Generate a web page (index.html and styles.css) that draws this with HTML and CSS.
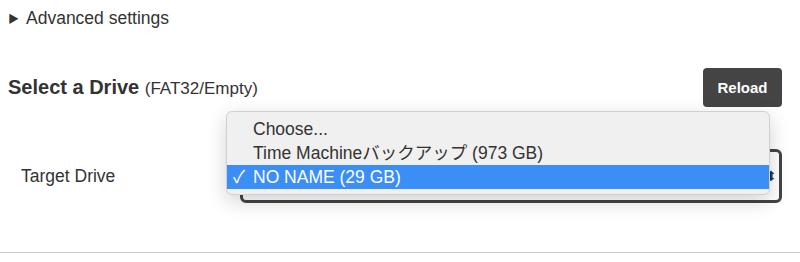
FILE: index.html
```html
<!DOCTYPE html>
<html lang="en">
<head>
  <meta charset="UTF-8">
  <title>Select a Drive</title>
  <link rel="stylesheet" href="styles.css">
</head>
<body>
  <div class="page">
    <details class="advanced">
      <summary>Advanced settings</summary>
    </details>

    <div class="section-head">
      <div class="section-title">Select a Drive <span class="hint">(FAT32/Empty)</span></div>
      <button class="reload">Reload</button>
    </div>

    <div class="field-row">
      <label class="field-label">Target Drive</label>
      <div class="select-wrap">
        <div class="select-box">
          <span class="select-arrow">&#x2B0D;</span>
        </div>
        <ul class="dropdown">
          <li>Choose...</li>
          <li>Time Machineバックアップ (973 GB)</li>
          <li class="selected"><span class="check">&#x2713;</span>NO NAME (29 GB)</li>
        </ul>
      </div>
    </div>
  </div>

  <hr class="divider">
</body>
</html>
```

FILE: styles.css
```css
* {
  box-sizing: border-box;
}

body {
  margin: 0;
  font-family: "Liberation Sans", Arial, "Noto Sans CJK JP", sans-serif;
  font-size: 17.5px;
  color: #333;
  background: #fff;
}

.page {
  padding: 8px 18px 0 8px;
}

.advanced summary {
  line-height: 20px;
  cursor: pointer;
  list-style: none;
}

.advanced summary::before {
  content: "\25B6";
  display: inline-block;
  font-size: 11px;
  margin-right: 7px;
  vertical-align: 1px;
}

.section-head {
  display: flex;
  align-items: center;
  justify-content: space-between;
  margin-top: 39px;
}

.section-title {
  font-size: 20px;
  font-weight: 700;
}

.hint {
  font-size: 17px;
  font-weight: 400;
}

.reload {
  background: #444;
  color: #fff;
  border: none;
  border-radius: 4px;
  font-family: inherit;
  font-size: 15px;
  font-weight: 700;
  width: 79px;
  height: 39px;
  cursor: pointer;
}

.field-row {
  display: flex;
  align-items: center;
  margin-top: 42px;
  padding-left: 13px;
}

.field-label {
  width: 219px;
}

.select-wrap {
  position: relative;
  flex: 1;
}

.select-box {
  height: 54px;
  border: 3px solid #444;
  border-radius: 6px;
  display: flex;
  align-items: center;
  justify-content: flex-end;
  padding: 0 2px 0 12px;
}

.select-arrow {
  font-size: 14px;
  color: #333;
}

.dropdown {
  position: absolute;
  top: -38px;
  left: -14px;
  width: 544px;
  margin: 0;
  padding: 5px 0;
  list-style: none;
  background: #f0f0f0;
  border: 1px solid #d0d0d0;
  border-radius: 6px;
  box-shadow: 0 6px 20px rgba(0, 0, 0, 0.18);
}

.dropdown li {
  height: 24px;
  line-height: 24px;
  padding-left: 26px;
  color: #333;
}

.dropdown li.selected {
  background: #3a8ef6;
  color: #fff;
  padding-left: 6px;
}

.check {
  display: inline-block;
  width: 20px;
}

.divider {
  border: none;
  border-top: 1px solid #ccc;
  margin: 49px 0 0;
}
```
